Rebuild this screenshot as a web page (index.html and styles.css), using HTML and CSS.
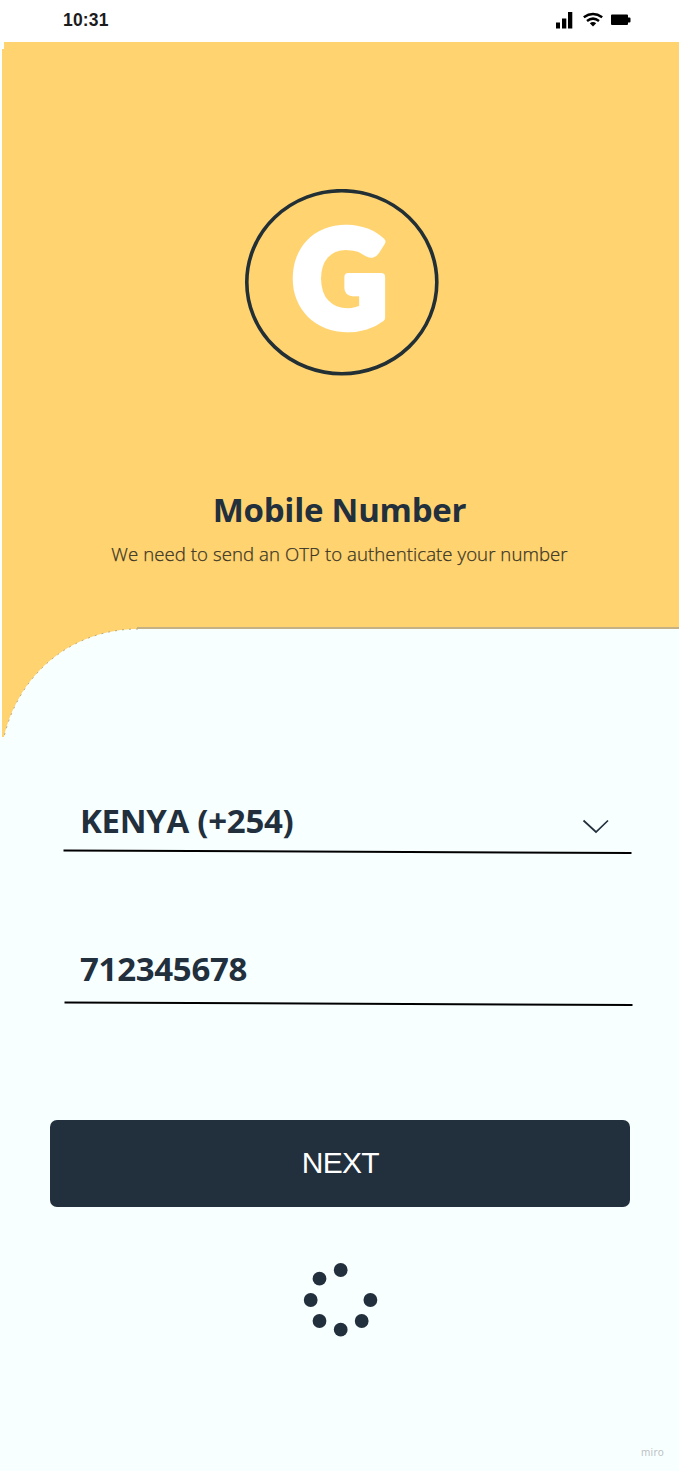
FILE: index.html
```html
<!DOCTYPE html>
<html lang="en">
<head>
<meta charset="utf-8">
<title>Mobile Number</title>
<link rel="stylesheet" href="styles.css">
</head>
<body>
<main class="screen">
  <header class="status">
    <span class="time">10:31</span>
    <svg class="status-icons" width="76" height="20" viewBox="0 0 76 20">
      <path d="M1 12.500h4V18.500H1zM7 8.500h4.300v10H7zM13 2h4.300v16.500H13z"/>
      <g fill="none" stroke="#000" stroke-width="2.500">
        <path d="M28.800 7.200Q38 .8 47.200 7.200"/>
        <path d="M32 10.900Q38 6.400 44 10.900"/>
      </g>
      <path d="M34.800 13.300Q38 10.900 41.200 13.300L38 16.500z"/>
      <path d="M57 4.500h15q1 0 1 1v2h1.500q1 0 1 1v3q0 1-1 1H73v1.500q0 1-1 1H57q-1 0-1-1V5.500q0-1 1-1z"/>
    </svg>
  </header>
  <section class="hero">
    <svg class="logo" width="195" height="187" viewBox="0 0 195 187">
      <ellipse cx="97.800" cy="93.200" rx="95" ry="91.500"/>
      <text class="logo-letter" transform="translate(48.500 137.500) scale(.96 .975)">G</text>
    </svg>
    <h1 class="title">Mobile Number</h1>
    <p class="subtitle">We need to send an OTP to authenticate your number</p>
  </section>
  <svg class="curve" width="679" height="112" viewBox="0 0 679 112">
    <path fill="#ffd370" d="M2 0H138V2C75 2 20 43 4 110H2z"/>
    <path fill="none" stroke="#a99b74" stroke-width=".8" stroke-dasharray="2 5" d="M138 2C75 2 20 43 4 110"/>
    <path fill="#c5b184" d="M137 0H679V2H137z"/>
  </svg>
  <form class="form">
    <div class="field country">
      <span>KENYA (+254)</span>
      <svg class="chevron" width="28" height="16" viewBox="0 0 28 16"><path d="M1.500 1.500L14 13L26 1.500"/></svg>
    </div>
    <svg class="rule" width="570" height="6" viewBox="0 0 570 6"><path d="M.5 1.500L568.500 4"/></svg>
    <div class="field phone"><span>712345678</span></div>
    <svg class="rule rule-phone" width="570" height="6" viewBox="0 0 570 6"><path d="M.5 1.500L568.500 4"/></svg>
    <button class="next" type="button">NEXT</button>
  </form>
  <svg class="spinner" width="76" height="76" viewBox="0 0 76 76">
    <circle cx="37.700" cy="8" r="6.900"/><circle cx="16.500" cy="16.700" r="6.900"/>
    <circle cx="7.700" cy="38" r="6.900"/><circle cx="16.500" cy="59" r="6.900"/>
    <circle cx="37.700" cy="67.700" r="6.900"/><circle cx="58.700" cy="59" r="6.900"/>
    <circle cx="67.400" cy="38" r="6.900"/>
  </svg>
  <footer class="brand">miro</footer>
</main>
</body>
</html>
```

FILE: styles.css
```css
* { box-sizing: border-box; }
body { margin: 0; background: #f8ffff; }
.screen {
  display: flex;
  flex-direction: column;
  width: 679px;
  height: 1471px;
  overflow: hidden;
  color: #222f3d;
  font-family: "Open Sans", sans-serif;
}
.screen svg { display: block; flex: none; }
.status {
  display: flex;
  justify-content: space-between;
  flex: none;
  height: 42px;
  padding: 10px 48px 0 63px;
  background: #fff;
}
.time {
  font: bold 17.5px/20px "Liberation Sans", sans-serif;
  letter-spacing: .15px;
  color: #1c1c1c;
}
.hero {
  display: flex;
  flex-direction: column;
  align-items: center;
  flex: none;
  height: 585px;
  margin-left: 2px;
  padding: 147px 3px 0 0;
  background: linear-gradient(#fff, #fff) 0 0 / 2px 7px no-repeat #ffd370;
}
.logo { margin-left: 5px; }
.logo ellipse { fill: none; stroke: #222f35; stroke-width: 3.6; }
.logo-letter {
  font: 900 136px Lato, sans-serif;
  fill: #fff;
  stroke: #fff;
  stroke-width: 8.5px;
  stroke-linejoin: round;
}
.title {
  margin: 111px 0 0 1px;
  font-size: 33px;
  line-height: 46px;
  font-weight: 700;
  letter-spacing: -.25px;
  white-space: nowrap;
}
.subtitle {
  margin: 8px 0 0 1px;
  font-size: 18.6px;
  line-height: 26px;
  font-weight: 300;
  letter-spacing: .07px;
  -webkit-text-stroke: .25px #3a3525;
  color: #3a3525;
  white-space: nowrap;
}
.form { display: flex; flex-direction: column; flex: none; }
.field {
  display: flex;
  justify-content: space-between;
  align-items: center;
  height: 46px;
  padding: 0 69px 0 80px;
  font-size: 33px;
  font-weight: 700;
  letter-spacing: -.3px;
  white-space: nowrap;
}
.country { margin-top: 58px; }
.chevron { margin-top: 13px; }
.chevron path { fill: none; stroke: #222f3d; stroke-width: 1.7; }
.rule { margin: 6px 0 0 63px; }
.rule path { fill: none; stroke: #000; stroke-width: 2; }
.phone { margin-top: 90px; }
.rule-phone { margin: 10px 0 0 64px; }
.next {
  width: 580px;
  height: 87px;
  margin: 113px 0 0 50.400px;
  padding: 0 0 2px;
  border: 0;
  border-radius: 7px;
  background: #222f3d;
  color: #fff;
  font: 30px "Liberation Sans", sans-serif;
  letter-spacing: -.7px;
}
.spinner { margin: 55px 0 0 303px; fill: #222f3d; }
.brand {
  margin: 107px 15px 0 auto;
  font: 10px/14px "Noto Sans", sans-serif;
  letter-spacing: .3px;
  color: #bcc2c5;
}
```
